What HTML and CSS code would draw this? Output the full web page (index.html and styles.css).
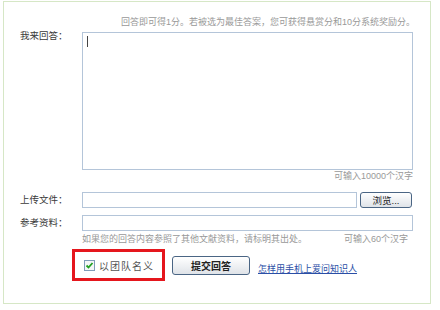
FILE: index.html
```html
<!DOCTYPE html>
<html lang="zh-CN">
<head>
    <meta charset="UTF-8">
    <title>我来回答</title>
    <link rel="stylesheet" href="styles.css">
</head>
<body>
    <div class="panel">
        <div class="row">
            <div class="label"></div>
            <div class="hint hint-top">回答即可得1分。若被选为最佳答案，您可获得悬赏分和10分系统奖励分。</div>
        </div>

        <div class="row">
            <div class="label label-answer">我来回答：</div>
            <div class="answer-wrap">
                <textarea class="answer"></textarea>
                <span class="caret"></span>
            </div>
        </div>

        <div class="row">
            <div class="label"></div>
            <div class="hint count">可输入10000个汉字</div>
        </div>

        <div class="row row-field row-upload">
            <div class="label">上传文件：</div>
            <div class="upload">
                <input type="text" class="text-input file-input">
                <button type="button" class="btn-browse">浏览...</button>
            </div>
        </div>

        <div class="row row-field row-ref">
            <div class="label">参考资料：</div>
            <input type="text" class="text-input ref-input">
        </div>

        <div class="row">
            <div class="label"></div>
            <div class="hint hint-ref">
                <span>如果您的回答内容参照了其他文献资料，请标明其出处。</span>
                <span class="ref-count">可输入60个汉字</span>
            </div>
        </div>

        <div class="actions">
            <label class="team">
                <svg class="check" width="11" height="11" viewBox="0 0 11 11">
                    <rect x="0.5" y="0.5" width="10" height="10" fill="#f4f6f8" stroke="#7f9db9"/>
                    <path d="M2.5 5.5 L4.5 7.5 L8.5 3" fill="none" stroke="#21a121" stroke-width="1.8"/>
                </svg>
                <span>以团队名义</span>
            </label>
            <button type="button" class="btn-submit">提交回答</button>
            <a href="#" class="help-link">怎样用手机上爱问知识人</a>
        </div>
    </div>
</body>
</html>
```

FILE: styles.css
```css
body {
    margin: 0;
    font-family: "Liberation Sans", "Noto Sans CJK SC", sans-serif;
    background: #fff;
}
.panel {
    width: 410px;
    height: 287px;
    margin: 1px 0 0 3px;
    border: 1px solid #d6e7c6;
    padding: 14px 0 0 16px;
}
.row {
    display: grid;
    grid-template-columns: 62px 331px;
}
.label {
    font-size: 9.5px;
    line-height: 12px;
    color: #3a3a3a;
}
.label-answer {
    margin-top: -2px;
}
.hint {
    font-size: 9px;
    line-height: 12px;
    color: #999;
}
.hint-top {
    text-align: right;
    margin-right: -2px;
    margin-bottom: 4px;
}
.answer-wrap {
    position: relative;
    height: 138px;
}
.answer {
    display: block;
    width: 100%;
    height: 138px;
    margin: 0;
    border: 1px solid #b4c5d9;
    box-sizing: border-box;
    resize: none;
    outline: none;
}
.caret {
    position: absolute;
    left: 5px;
    top: 4px;
    width: 1px;
    height: 11px;
    background: #444;
}
.count {
    text-align: right;
}
.row-field {
    align-items: center;
}
.row-upload {
    margin-top: 10px;
}
.row-ref {
    margin-top: 7px;
}
.upload {
    display: flex;
    align-items: center;
    gap: 3px;
}
.text-input {
    height: 16px;
    margin: 0;
    padding: 0;
    border: 1px solid #b4c5d9;
    box-sizing: border-box;
    outline: none;
}
.file-input {
    width: 275px;
}
.ref-input {
    width: 331px;
}
.btn-browse {
    width: 52px;
    height: 16px;
    padding: 0;
    border: 1px solid #4a6584;
    border-radius: 3px;
    background: linear-gradient(#ffffff, #dfe3e8);
    font-family: inherit;
    font-size: 9.5px;
    color: #222;
}
.hint-ref {
    display: flex;
    justify-content: space-between;
    margin-top: 2px;
    padding-right: 5px;
}
.actions {
    display: flex;
    align-items: center;
    margin: 4px 0 0 52px;
}
.team {
    display: flex;
    align-items: center;
    gap: 4px;
    width: 93px;
    height: 32px;
    border: 3px solid #e5161d;
    box-sizing: border-box;
    padding-left: 9px;
    font-size: 10px;
    letter-spacing: 1px;
    color: #555;
}
.check {
    display: block;
}
.btn-submit {
    width: 78px;
    height: 19px;
    margin-left: 7px;
    padding: 0;
    border: 1px solid #4a6584;
    border-radius: 3px;
    background: linear-gradient(#ffffff, #dfe3e8);
    font-family: inherit;
    font-size: 10px;
    font-weight: bold;
    color: #222;
}
.help-link {
    margin: 6px 0 0 8px;
    font-size: 9px;
    color: #2a4ea6;
}
```
